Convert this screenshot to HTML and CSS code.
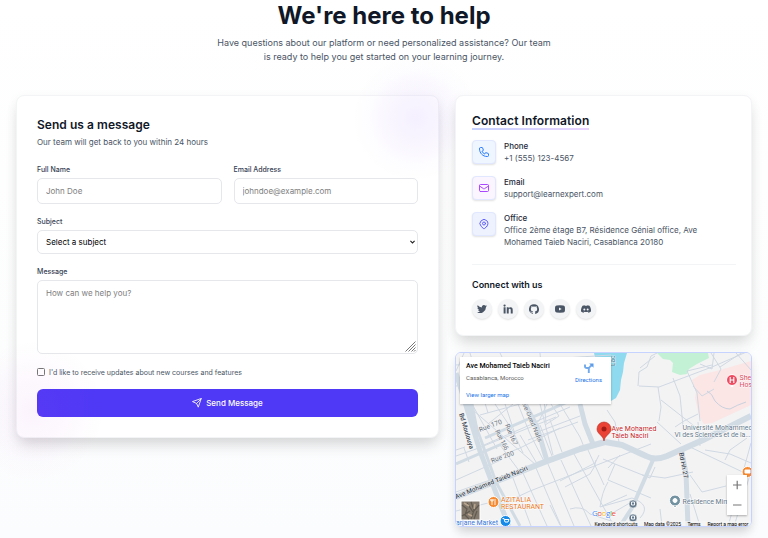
FILE: index.html
```html
<!DOCTYPE html>
<html lang="en">
<head>
<meta charset="utf-8">
<title>Contact</title>
<link rel="stylesheet" href="styles.css">
</head>
<body>
<main class="page">
  <header class="intro">
    <h1>We're here to help</h1>
    <p>Have questions about our platform or need personalized assistance? Our team<br>is ready to help you get started on your learning journey.</p>
  </header>
  <div class="columns">
    <section class="card form-card">
      <div class="glow glow-top"></div>
      <div class="glow glow-bottom"></div>
      <h2>Send us a message</h2>
      <p class="sub">Our team will get back to you within 24 hours</p>
      <form>
        <div class="row">
          <div class="field"><label>Full Name</label><input type="text" placeholder="John Doe"></div>
          <div class="field"><label>Email Address</label><input type="text" placeholder="johndoe@example.com"></div>
        </div>
        <div class="field"><label>Subject</label>
          <div class="select"><span>Select a subject</span><svg width="5" height="4" viewBox="0 0 5 4"><path d="M.4.8 2.5 2.9 4.6.8" fill="none" stroke="#222" stroke-width="1.1"/></svg></div>
        </div>
        <div class="field message"><label>Message</label>
          <div class="area"><span>How can we help you?</span><svg class="grip" width="11" height="11" viewBox="0 0 11 11"><path d="M.5 10.5l10-10M3.5 10.5l7-7M6.5 10.5l4-4M9 10.5l1.5-1.5" stroke="#555" stroke-width=".8"/></svg></div>
        </div>
        <div class="check"><i></i><span>I'd like to receive updates about new courses and features</span></div>
        <button type="button"><svg width="10" height="10" viewBox="0 0 24 24" fill="none" stroke="#fff" stroke-width="2" stroke-linejoin="round" stroke-linecap="round"><path d="M22 2 11 13M22 2l-7 20-4-9-9-4z"/></svg><span>Send Message</span></button>
      </form>
    </section>
    <div class="side">
      <section class="card info-card">
        <h2><span>Contact Information</span></h2>
        <div class="item"><div class="tile blue"><svg viewBox="0 0 24 24"><path d="M3 5a2 2 0 0 1 2-2h3.300a1 1 0 0 1 .9.7l1.500 4.500a1 1 0 0 1-.5 1.200l-2.300 1.100a11 11 0 0 0 5.600 5.600l1.100-2.300a1 1 0 0 1 1.200-.5l4.500 1.500a1 1 0 0 1 .7.9V19a2 2 0 0 1-2 2h-1C9.700 21 3 14.300 3 6z"/></svg></div><div><b>Phone</b><p>+1 (555) 123-4567</p></div></div>
        <div class="item"><div class="tile purple"><svg viewBox="0 0 24 24"><path d="M3 8l7.900 5.300a2 2 0 0 0 2.200 0L21 8M5 19h14a2 2 0 0 0 2-2V7a2 2 0 0 0-2-2H5a2 2 0 0 0-2 2v10a2 2 0 0 0 2 2z"/></svg></div><div><b>Email</b><p>support@learnexpert.com</p></div></div>
        <div class="item"><div class="tile indigo"><svg viewBox="0 0 24 24"><path d="M17.700 16.700 13.400 20.900a2 2 0 0 1-2.800 0l-4.300-4.200a8 8 0 1 1 11.400 0z"/><circle cx="12" cy="11" r="3"/></svg></div><div><b>Office</b><p>Office 2ème étage B7, Résidence Génial office, Ave<br>Mohamed Taieb Naciri, Casablanca 20180</p></div></div>
        <div class="connect">
          <h3>Connect with us</h3>
          <div class="socials">
            <a><svg viewBox="0 0 24 24"><path d="M24 4.600a10 10 0 0 1-2.800.8 5 5 0 0 0 2.100-2.700 10 10 0 0 1-3.100 1.200 4.900 4.900 0 0 0-8.400 4.500A14 14 0 0 1 1.700 3.100a4.900 4.900 0 0 0 1.500 6.600 5 5 0 0 1-2.200-.6v.1a4.900 4.900 0 0 0 3.900 4.800 5 5 0 0 1-2.200.1 4.900 4.900 0 0 0 4.600 3.400A10 10 0 0 1 0 19.500 14 14 0 0 0 21.500 7.100 10 10 0 0 0 24 4.600z"/></svg></a>
            <a><svg viewBox="0 0 24 24"><path d="M1.500 8h4.700v14.500H1.500zM9 8h4.500v2c.8-1.400 2.300-2.400 4.500-2.400 4.300 0 5.300 2.800 5.300 6.500v8.400h-4.700V15c0-1.800-.1-3.700-2.400-3.700S13.700 13 13.700 15v7.500H9z"/><circle cx="3.800" cy="3.700" r="2.700"/></svg></a>
            <a><svg viewBox="0 0 24 24"><path d="M12 .5a12 12 0 0 0-3.800 23.400c.6.100.8-.3.800-.6v-2.200c-3.300.7-4-1.400-4-1.400-.6-1.400-1.400-1.800-1.400-1.800-1-.7.100-.7.100-.7 1.200.1 1.900 1.200 1.900 1.200 1.100 1.900 2.800 1.300 3.500 1 .1-.8.400-1.300.8-1.600-2.700-.3-5.500-1.300-5.500-5.900 0-1.300.5-2.400 1.200-3.200-.1-.3-.5-1.500.1-3.200 0 0 1-.3 3.300 1.200a11.500 11.500 0 0 1 6 0c2.300-1.500 3.300-1.200 3.300-1.200.7 1.700.2 2.900.1 3.200.8.800 1.200 1.900 1.200 3.200 0 4.600-2.800 5.600-5.500 5.900.4.400.8 1.100.8 2.200v3.300c0 .3.200.7.800.6A12 12 0 0 0 12 .5z"/></svg></a>
            <a><svg viewBox="0 0 24 24"><path fill-rule="evenodd" d="M4 3.500Q12 2.800 20 3.500q3.300.3 3.700 3.500.5 5 0 10-.4 3.200-3.700 3.500-8 .7-16 0Q.7 20.200.3 17q-.5-5 0-10Q.7 3.800 4 3.500zM9.600 8.300v7.400L16 12z"/></svg></a>
            <a><svg viewBox="0 0 24 24"><path fill-rule="evenodd" d="M20.300 4.400A20 20 0 0 0 15.400 3l-.6 1.200a18 18 0 0 0-5.500 0L8.600 3a20 20 0 0 0-4.900 1.400C.5 9-.3 13.600.1 18.100a20 20 0 0 0 6 3l1.300-2-1.900-.9.400-.3a14 14 0 0 0 12.200 0l.4.300-1.900.9 1.300 2a20 20 0 0 0 6-3c.5-5.200-.8-9.700-3.600-13.700zM8 15.300a2.300 2.300 0 1 1 0-4.800 2.300 2.300 0 0 1 0 4.800zm8 0a2.300 2.300 0 1 1 0-4.800 2.300 2.300 0 0 1 0 4.800z"/></svg></a>
          </div>
        </div>
      </section>
      <section class="map">
        <svg class="canvas" viewBox="456 353 295 173" width="295" height="173">
          <rect x="456" y="353" width="295" height="173" fill="#f3f3f4"/>
          <path fill="#8fdaee" d="M594 353h33l-3 10-1 9-2 8-1 10-4 8-5 3-6-4z"/>
          <path fill="#c3f1d5" d="M657 353l6 6 7 1 3 3-1 9 8 3 7-1 2-5 8-5 12-6-1-5z"/>
          <path fill="#fbe5e5" d="M751 361l-31 9-20 5-8 5 4 12-1 6 4 18 5 8 8-1 39-18z"/>
          <g class="minor">
            <path d="M456 371l8-18M456 386l155-20M456 365l155-10M470 353l18 60M500 353l40 80M540 353l6 70"/>
            <path d="M466 404l70 61M472 404l25 45M495 404l18 27 10 22M505 404l10 30M518 404l12 30 15 29M540 404l13 51M528 440l50-18M480 415l40-11M488 424l25-20M484 445l55-24 8-17M530 424l40-17M535 433l45-17M551 404l8 12-14 9M560 404l20 33 4 10"/>
            <path d="M456 480l45-20M456 456l20-7 80-32M490 460l30-12 40-20M456 463l17-6M464 448l5 14M456 450l9-3M500 445l20 27M520 435l16 27M540 425l12 31M550 420l12 32M490 480l-34 12M500 500l-44 11M500 505l30-14 121-47M513 478l18 48M523 473l24 53M536 468l25 58M548 464l26 62M561 460l30 66M574 454l40 72M588 450l16 35M560 481l35-18 4-8M565 487l25-13q6-8 6-14M570 509q12-4 20 5l30 10M550 505l10 20"/>
            <path d="M638 386l1-14 8-5 4-11 6-3M639 386l20 1 53-20 39-17M640 368l15-12M658 387l3 20-2 14M661 400l37 29M673 378l7 18 3 30M687 371l10 22 3 28M687 371l25-6M657 422l24 22M607 410l8 12 5 25M675 427l9-6 14-7M711 353l10 16-7 13M714 353l-2 16-12-5M720 367l29-19M736 353l15 17M698 422l2 24M693 386l9 10 12-7"/>
            <path d="M603 459l12 5-7 16 43 18M615 464l35 14 5-11M620 455l-12 13M642 475l23 3 28-6M690 447l61 29M725 460l5-10 17-12M608 482q-6 10-8 25l32-9q20 7 8 20M635 500l-26 15M660 509l2 17M690 475l12 17 24-6M690 494l10 32M602 506l25-11M705 450l25 4 21 9M751 443l-22 80M755 459l-20 64"/>
            <path stroke="#c8d1de" d="M707 391q5 2 8 10 7 8 15 8 7-4 16-7"/>
          </g>
          <g class="major">
            <path stroke-width="5" d="M456 373l24 78 21 55 8 20M477 436l-6-32-8-40"/>
            <path stroke-width="3" d="M468 404l28 78 24 44"/>
            <path stroke-width="6" d="M456 497l86-34 38-14 25-7 17 3 24 11q9 5 21 0l36-16 48-24"/>
            <path stroke-width="4" d="M653 460l-21 48-12 18"/>
            <path stroke-width="5" d="M681 448l5 25 2 53M525 404l12 23 10 34M580 404l5 20 8 20"/>
            <path stroke-width="3" d="M485 438l94-41M456 464l48-21"/>
          </g>
          <g class="road-text">
            <text class="dark" transform="translate(459 414) rotate(73)" textLength="37">Bd Moulouya</text>
            <text transform="translate(480 432) rotate(-21)" textLength="24">Rue 170</text>
            <text transform="translate(495 431) rotate(63)" textLength="22">Rue 166</text>
            <text transform="translate(505 425) rotate(67)" textLength="22">Rue 167</text>
            <text transform="translate(521 401) rotate(67)" textLength="45">Ave Oued Nafis</text>
            <text transform="translate(492 463) rotate(-20)" textLength="24">Rue 200</text>
            <text class="dark" transform="translate(456 499) rotate(-22)" textLength="78">Ave Mohamed Taieb Naciri</text>
            <text class="dark" transform="translate(679 453) rotate(79)" textLength="26">Bd Hh 27</text>
            <text style="fill:#24809a" transform="translate(615 366) rotate(-90)">Lac</text>
          </g>
          <g class="poi">
            <text x="611.500" y="430.500" fill="#c5221f" textLength="45">Ave Mohamed</text><text x="611.500" y="437.500" fill="#c5221f" textLength="37">Taieb Naciri</text>
            <text x="682.500" y="429.500" fill="#65788a" textLength="70">Université Mohammed</text><text x="674.500" y="436.500" fill="#65788a" textLength="76">VI des Sciences et de la...</text>
            <text x="739.500" y="380" fill="#d9475b">Sheikh</text><text x="739.500" y="387" fill="#d9475b">Hospital</text>
            <text x="501" y="501.500" fill="#e87520" textLength="30">AZITALIA</text><text x="501" y="508.500" fill="#e87520" textLength="43">RESTAURANT</text>
            <text x="682.500" y="504" fill="#65788a" textLength="58">Résidence Mimosa</text>
            <text x="450" y="525" fill="#3374d8" textLength="48">Marjane Market</text>
          </g>
          <path d="M604 441c-1-6-7-7-7-12a7 7 0 0 1 14 0c0 5-6 6-7 12z" fill="#ea4335" stroke="#b92b20" stroke-width=".6"/><circle cx="604" cy="429" r="2.500" fill="#a31c16"/>
          <g stroke="#fff"><path d="M732 387l-5-4h10z" fill="#fff"/><circle cx="732" cy="380" r="5.500" fill="#ee4b60"/><path d="M730.200 377v6M733.800 377v6M730.200 380h3.600" stroke-width="1.100"/>
            <circle cx="493.500" cy="502" r="5.500" fill="#f58a32"/><path d="M492 499v6M495 499v6M490.900 499v2h2.200v-2" fill="none" stroke-width=".9"/>
            <circle cx="505.500" cy="521" r="5.500" fill="#168ae8"/><path d="M502.500 518.500h1.500l1 3.500h3l1-2.500h-4.500" fill="none"/>
            <path d="M675 508l-5-5h10z" fill="#7292a2"/><circle cx="675" cy="500.500" r="5.500" fill="#7292a2"/><circle cx="675" cy="500.500" r="2" fill="#fff"/>
            <circle cx="747.500" cy="472" r="5.500" fill="#f58a32"/><path d="M745 470h5v3h-5z" fill="#fff"/>
          </g>
          <g fill="#63788b" stroke="#fff" stroke-width=".5"><circle cx="633" cy="504" r="4"/><circle cx="633" cy="518" r="4"/></g>
          <g fill="none" stroke="#fff" stroke-width=".9"><path d="M631.500 502h3v3h-3zM631.500 516h3v3h-3z"/></g>
          <text class="google" x="592" y="516" textLength="24"><tspan fill="#4285f4">G</tspan><tspan fill="#ea4335">o</tspan><tspan fill="#fbbc05">o</tspan><tspan fill="#4285f4">g</tspan><tspan fill="#34a853">l</tspan><tspan fill="#ea4335">e</tspan></text>
          <path d="M593 521h158v5H593z" fill="#f5f5f5" opacity=".7"/>
          <g class="legal"><text x="594.500" y="525.700" textLength="43">Keyboard shortcuts</text><text x="644" y="525.700" textLength="37">Map data ©2025</text><text x="687.500" y="525.700" textLength="13">Terms</text><text x="707.500" y="525.700" textLength="41">Report a map error</text></g>
          <rect x="461" y="501" width="19" height="19" fill="#83796c" stroke="#fff"/>
          <path d="M462 505l5 4-2 6 4 4M471 502l3 8-3 9M467 503l6 9 6-7M477 511l-3 8M462 516l8-5" stroke="#625a50" fill="none" stroke-width="1.200"/><path d="M464 503l5 3M475 504l-1 5M468 514l4 2" stroke="#b9a58e" stroke-width="1.500"/>
        </svg>
        <div class="place">
          <div class="names"><strong>Ave Mohamed Taieb Naciri</strong><span>Casablanca, Morocco</span><a>View larger map</a></div>
          <div class="dir"><svg width="10" height="10" viewBox="0 0 10 10"><path d="M1 1.500v2q0 1.500 2 1.500h1.500M4.800 10V6q0-1.500 1.200-2.200L8 2" fill="none" stroke="#72a8ec" stroke-width="1.900"/><path d="M5.200 .5h4.300v4.300z" fill="#5e9cea"/></svg><a>Directions</a></div>
        </div>
        <div class="zoom"><svg width="20" height="40" viewBox="0 0 20 40"><path d="M6 10h8.500M10.200 5.800v8.500M6 30h8.500" stroke="#777" stroke-width="1.200"/></svg></div>
      </section>
    </div>
  </div>
</main>
</body>
</html>
```
FILE: styles.css
```css
* { box-sizing: border-box; margin: 0; padding: 0; }
body { width: 768px; height: 538px; overflow: hidden; font-family: Inter, sans-serif; background: linear-gradient(#fff, #fbfcfd); color: #101828; }
.page { padding: 0 16px; }
.intro { height: 95px; text-align: center; }
h1 { font-size: 24px; line-height: 30px; font-weight: 700; padding-top: 1px; }
.intro p { font-size: 9px; line-height: 14px; margin-top: 5px; color: #4a5565; white-space: nowrap; }
.columns { display: flex; gap: 16px; align-items: flex-start; }
.card { position: relative; background: #fff; border: 1px solid #f3f4f6; border-radius: 8px; box-shadow: 0 10px 15px -3px rgba(0,0,0,.12), 0 3px 12px rgba(0,0,0,.05); }
.form-card { width: 423px; height: 343px; padding: 21px 20px; }
.glow { position: absolute; border-radius: 50%; pointer-events: none; }
.glow-top { right: -42px; top: -42px; width: 128px; height: 128px; background: radial-gradient(circle, rgba(142,81,255,.085), rgba(142,81,255,.05) 30%, rgba(142,81,255,.015) 52%, transparent 70%); }
.glow-bottom { left: -56px; bottom: -46px; width: 144px; height: 144px; background: radial-gradient(circle, rgba(194,60,220,.06), rgba(194,60,220,.035) 30%, rgba(194,60,220,.01) 54%, transparent 70%); }
h2 { font-size: 12px; line-height: 16px; font-weight: 600; white-space: nowrap; letter-spacing: .04px; }
.sub { font-size: 8px; line-height: 12px; margin-top: 3px; color: #4a5565; }
form { margin-top: 17px; }
.row { display: grid; grid-template-columns: 1fr 1fr; gap: 12px; }
.field { display: flex; flex-direction: column; gap: 3px; }
.field label { font-size: 7px; line-height: 10px; font-weight: 500; color: #364153; }
.field input { width: 100%; height: 26px; }
.field input, .select, .area { border: 1px solid #e5e7eb; border-radius: 5px; padding: 0 8px; font: 8px/12px Inter, sans-serif; background: #fff; }
.row + .field, .message { margin-top: 13px; }
.field input::placeholder, .area { color: #808080; }
.select { height: 24px; display: flex; align-items: center; justify-content: space-between; padding-right: 2px; color: #000; }
.area { height: 74px; padding-top: 6px; position: relative; }
.grip { position: absolute; right: 1px; bottom: 1px; }
.check { display: flex; gap: 4px; align-items: center; margin-top: 13px; height: 10px; font-size: 7px; color: #4a5565; }
.check i { width: 8px; height: 8px; border: 1px solid #767676; border-radius: 1.500px; }
button { width: 100%; height: 28px; margin-top: 12px; border: 0; border-radius: 6px; background: #4f39f6; color: #fff; display: flex; align-items: center; justify-content: center; gap: 4px; font: 500 8px Inter, sans-serif; }
.side { display: grid; gap: 16px; }
.info-card { width: 297px; height: 241px; padding: 17px 15px 0 16px; }
.info-card h2 { display: flex; margin-bottom: 10px; letter-spacing: .08px; }
.info-card h2 span { height: 17px; border-bottom: 2px solid; border-image: linear-gradient(90deg, #c6d2ff, #e9d4ff) 1; }
.item { display: flex; gap: 8px; height: 24px; margin-bottom: 12px; font-size: 8px; line-height: 12px; white-space: nowrap; }
.item b { display: block; font-weight: 500; color: #1e2939; }
.item p { color: #4a5565; }
.tile { width: 24px; height: 24px; display: grid; place-items: center; border: 1px solid #e0e7ff; border-radius: 4px; box-shadow: 0 1px 2px rgba(0,0,0,.12); }
.tile svg { width: 12px; height: 12px; fill: none; stroke: currentColor; stroke-width: 2; stroke-linecap: round; stroke-linejoin: round; }
.blue { background: #eff6ff; color: #2b7fff; }
.purple { background: #faf5ff; color: #ad46ff; }
.indigo { background: #eef2ff; color: #615fff; }
.connect { border-top: 1px solid #f3f4f6; margin-top: 28px; padding-top: 13px; }
h3 { font-size: 9px; line-height: 14px; font-weight: 600; }
.socials { display: flex; gap: 6px; margin-top: 7px; }
.socials a { width: 20px; height: 20px; border-radius: 50%; background: #f3f4f6; display: grid; place-items: center; box-shadow: 0 1px 2px rgba(0,0,0,.12); }
.socials svg { width: 10px; height: 10px; fill: #4a5565; }
.map { position: relative; width: 297px; height: 175px; border: 1px solid #c6d2ff; border-radius: 6px; overflow: hidden; }
.side .map { box-shadow: 0 8px 12px -3px rgba(0,0,0,.14), 0 3px 10px rgba(0,0,0,.05); }
.canvas { display: block; }
.minor { fill: none; stroke: #cfd8e2; stroke-width: 1; }
.major { fill: none; stroke: #d1dbe4; stroke-linejoin: round; }
.road-text { font: 6.500px Roboto, sans-serif; fill: #66717c; stroke: #f3f3f4; stroke-width: .8px; paint-order: stroke; }
.road-text .dark { fill: #3f4b57; font-weight: 500; }
.poi { font: 7px Roboto, sans-serif; stroke: #fff; stroke-width: .8px; paint-order: stroke; }
.google { font: 500 8px "Open Sans", sans-serif; stroke: #fff; stroke-width: .8px; paint-order: stroke; }
.legal { font: 5px Roboto, sans-serif; fill: #000; }
.place { position: absolute; left: 4px; top: 4px; width: 151px; height: 47px; background: #fff; box-shadow: 0 1px 2px rgba(0,0,0,.25); display: flex; justify-content: space-between; padding: 5px 9px 0 6px; font-family: Roboto, sans-serif; white-space: nowrap; }
.names { display: flex; flex-direction: column; }
.place strong { font-size: 7px; line-height: 9px; font-weight: 500; color: #000; }
.names span { font-size: 6px; line-height: 8px; margin-top: 3px; color: #5b5b5b; }
.place a { font-size: 6px; line-height: 8px; color: #1a73e8; }
.names a { margin-top: 9px; }
.dir { display: flex; flex-direction: column; align-items: center; padding-top: 1px; }
.dir a { margin-top: 3px; }
.zoom { position: absolute; right: 4px; bottom: 11px; width: 20px; height: 40px; background: #fff; box-shadow: 0 1px 2px rgba(0,0,0,.3); }
.zoom svg { display: block; }
```
